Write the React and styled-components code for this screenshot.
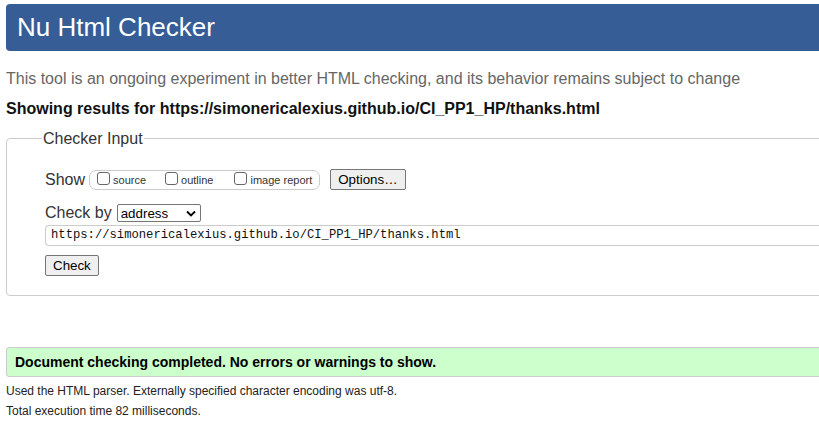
import React from 'react'
import styled, { createGlobalStyle } from 'styled-components'

const GlobalStyle = createGlobalStyle`
  html, body {
    margin: 0;
    padding: 0;
    background: #fff;
    overflow: hidden;
  }
  body {
    font-family: "Liberation Sans", Arial, sans-serif;
    color: #222;
  }
`

const Page = styled.div`
  width: 860px;
  padding: 4px 0 0 6px;
`

const Header = styled.h1`
  margin: 0;
  height: 47px;
  line-height: 47px;
  padding-left: 11px;
  background: #365d95;
  color: #fff;
  font-size: 26px;
  font-weight: normal;
  border-radius: 4px;
`

const Intro = styled.p`
  margin: 18px 0 0;
  font-size: 16px;
  line-height: 19px;
  color: #666;
`

const Results = styled.p`
  margin: 11px 0 0;
  font-size: 16px;
  line-height: 19px;
  font-weight: bold;
  color: #111;
`

const Fieldset = styled.fieldset`
  margin: 11px 0 0;
  padding: 21px 0 19px 38px;
  border: 1px solid #ccc;
  border-radius: 4px;
  min-width: 0;
`

const Legend = styled.legend`
  margin-left: -3px;
  padding: 0 1px;
  font-size: 16px;
  line-height: 19px;
  color: #333;
`

const Row = styled.div`
  display: flex;
  align-items: center;
  gap: ${p => p.$gap || 4}px;
  margin-top: ${p => p.$top || 0}px;
`

const Label = styled.span`
  font-size: 16px;
  color: #333;
`

const ShowGroup = styled.div`
  display: flex;
  align-items: center;
  height: 18px;
  padding: 0 7px 0 7px;
  border: 1px solid #ccc;
  border-radius: 7px;
`

const Option = styled.label`
  display: flex;
  align-items: center;
  font-size: 11px;
  color: #333;
  margin-right: ${p => p.$space || 0}px;
`

const Box = styled.span`
  width: 11px;
  height: 11px;
  border: 1px solid #666;
  border-radius: 3px;
  margin: -3px 3px 0 0;
  background: #fff;
`

const Button = styled.button`
  font-family: "Liberation Sans", Arial, sans-serif;
  font-size: 13.33px;
  color: #000;
  height: 21px;
  padding: 0 7px;
  background: #efefef;
  border: 1px solid #767676;
  border-radius: 2px;
`

const Select = styled.div`
  display: flex;
  align-items: center;
  justify-content: space-between;
  width: 75px;
  height: 16px;
  padding: 0 4px 0 3px;
  border: 1px solid #767676;
  border-radius: 2px;
  font-size: 13.33px;
  color: #000;
`

const UrlInput = styled.div`
  margin-top: 3px;
  height: 19px;
  line-height: 19px;
  padding-left: 5px;
  border: 1px solid #ccc;
  border-right: none;
  border-radius: 4px 0 0 4px;
  font-family: "Liberation Mono", "DejaVu Sans Mono", monospace;
  font-size: 12.2px;
  color: #111;
`

const CheckRow = styled.div`
  margin-top: 9px;
`

const Status = styled.div`
  margin-top: 51px;
  height: 28px;
  line-height: 28px;
  padding-left: 8px;
  background: #ccffcc;
  border: 1px solid #ccc;
  border-radius: 3px;
  font-size: 14px;
  font-weight: bold;
  color: #000;
`

const Note = styled.p`
  margin: ${p => p.$top || 0}px 0 0;
  font-size: 12px;
  line-height: 14px;
  color: #222;
`

const Chevron = () => (
  <svg width="10" height="7" viewBox="0 0 10 7">
    <path d="M1 1.5 L5 5.5 L9 1.5" fill="none" stroke="#000" strokeWidth="1.8" />
  </svg>
)

export default function App() {
  return (
    <Page>
      <GlobalStyle />
      <Header>Nu Html Checker</Header>
      <Intro>This tool is an ongoing experiment in better HTML checking, and its behavior remains subject to change</Intro>
      <Results>Showing results for https://simonericalexius.github.io/CI_PP1_HP/thanks.html</Results>
      <Fieldset>
        <Legend>Checker Input</Legend>
        <Row $gap={10}>
          <Row $gap={4}>
            <Label>Show</Label>
            <ShowGroup>
              <Option $space={19}><Box />source</Option>
              <Option $space={21}><Box />outline</Option>
              <Option><Box />image report</Option>
            </ShowGroup>
          </Row>
          <Button>Options…</Button>
        </Row>
        <Row $top={14} $gap={5}>
          <Label>Check by</Label>
          <Select>address<Chevron /></Select>
        </Row>
        <UrlInput>https://simonericalexius.github.io/CI_PP1_HP/thanks.html</UrlInput>
        <CheckRow>
          <Button>Check</Button>
        </CheckRow>
      </Fieldset>
      <Status>Document checking completed. No errors or warnings to show.</Status>
      <Note $top={7}>Used the HTML parser. Externally specified character encoding was utf-8.</Note>
      <Note $top={6}>Total execution time 82 milliseconds.</Note>
    </Page>
  )
}
